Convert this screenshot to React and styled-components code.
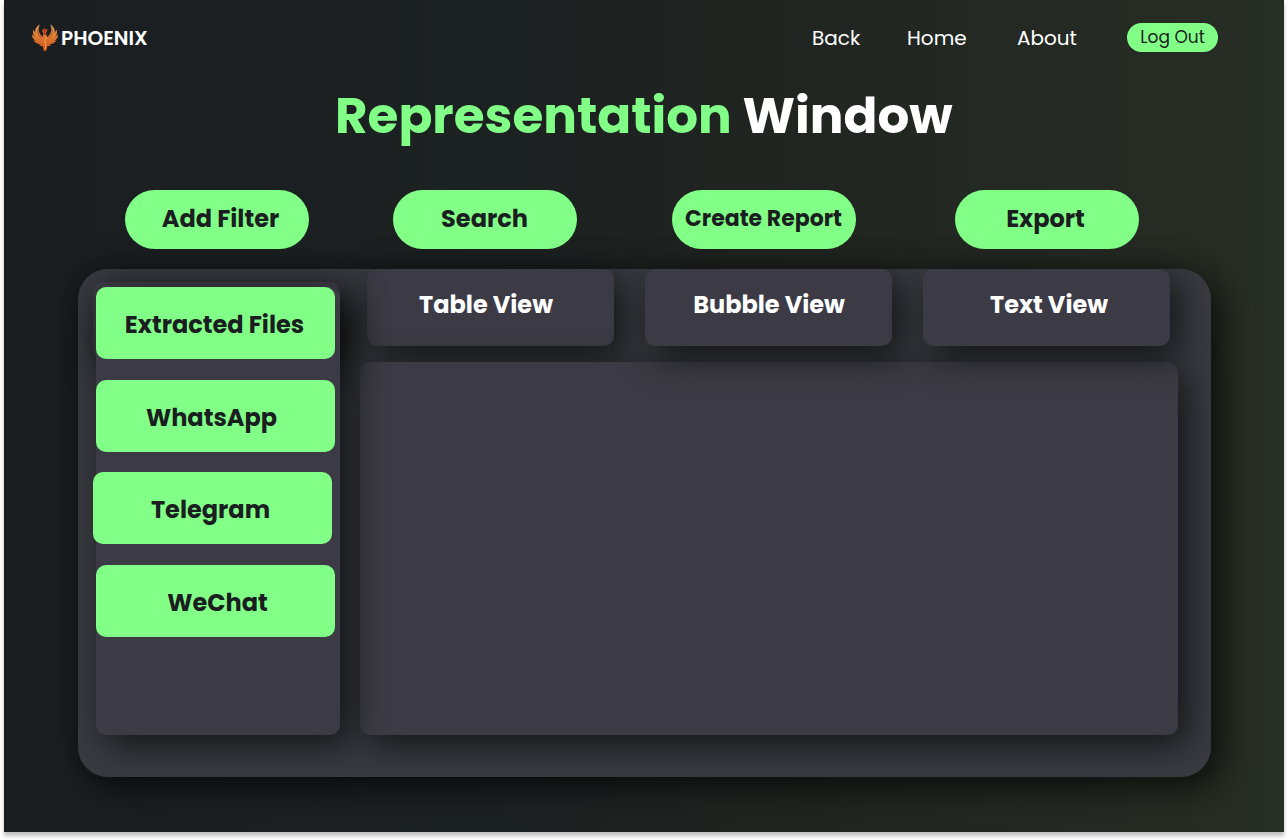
import React from "react";
import styled, { createGlobalStyle } from "styled-components";

const Global = createGlobalStyle`
  * { box-sizing: border-box; }
  body { margin: 0; min-height: 840px; background: #fff; font-family: Poppins, Inter, "Liberation Sans", sans-serif; overflow: hidden; }
  button { font: inherit; border: 0; padding: 0; margin: 0; cursor: pointer; }
`;
const green = "#82ff87";
const ink = "#1a1e20";
const slate = "#3c3b45";
const lift = "9px 10px 36px rgba(0,0,0,.68)";

const Window = styled.main`
  width: 1280px; height: 832px; margin-left: 4px;
  display: flex; flex-direction: column;
  background: linear-gradient(90deg, #1a1e21 0%, #1c2121 40%, #222722 70%, #272e24 100%);
  box-shadow: 0 4px 4px rgba(0,0,0,.25);
`;
const Header = styled.header`
  display: flex; align-items: center; justify-content: space-between;
  height: 76px; padding: 0 66px 0 27px;
`;
const Brand = styled.div`
  display: flex; align-items: center; gap: 2px; color: #fff;
  font-size: 20px; font-weight: 600;
`;
const Nav = styled.nav`display: flex; align-items: center;`;
const NavLink = styled.a`
  color: #fff; font-size: 20px; line-height: 30px; white-space: nowrap;
  width: ${p => p.$w}px; padding-bottom: 1px;
`;
const LogOut = styled.button`
  width: 91px; height: 29px; border-radius: 15px; background: ${green}; color: ${ink};
  && { font-size: 17px; } margin-top: -1px; padding-bottom: 1px; white-space: nowrap;
`;
const Title = styled.h1`
  margin: 0; padding-left: 331px; height: 114px; line-height: 79px;
  font-size: 50px; font-weight: 700; color: #fff; white-space: nowrap;
`;
const Accent = styled.span`color: ${green};`;
const Label = styled.button`
  white-space: nowrap; color: ${ink};
  padding-left: ${p => Math.max(p.$nudge || 0, 0) * 2}px;
  padding-right: ${p => Math.max(-(p.$nudge || 0), 0) * 2}px;
  && { font-size: ${p => p.$size || 24}px; font-weight: 700; }
`;
const Actions = styled.div`display: flex; height: 79px; padding-left: 121px; z-index: 1;`;
const Pill = styled(Label)`
  width: 184px; height: 59px; border-radius: 30px; background: ${green};
  margin-right: ${p => p.$gap || 0}px;
  padding-bottom: 3px;
`;
const Board = styled.section`
  width: 1133px; height: 508px; margin-left: 74px; border-radius: 30px; background: #3a3b41;
  box-shadow: ${lift};
  display: flex; gap: 20px; padding-left: 18px;
  isolation: isolate;
`;
const SidebarArea = styled.aside`
  position: relative; z-index: 3; width: 244px; height: 448px; margin-top: 18px;
  &::before {
    content: ""; position: absolute; z-index: -1; left: -3px; top: -5px;
    width: 247px; height: 77px; border-radius: 10px; background: ${slate}; box-shadow: ${lift};
  }
`;
const Sidebar = styled.div`
  height: 448px; border-radius: 10px; background: ${slate}; box-shadow: ${lift};
`;
const Main = styled.div`width: 818px; display: flex; flex-direction: column;`;
const Tabs = styled.div`display: flex; gap: 31px; padding-left: 7px; height: 93px;`;
const Tab = styled(Label)`
  width: 247px; height: 77px; border-radius: 10px; background: ${slate}; color: #fff;
  box-shadow: ${lift}; z-index: ${p => p.$level};
  padding-bottom: 7px;
`;
const Content = styled.div`
  height: 373px; border-radius: 10px; background: ${slate}; box-shadow: ${lift}; z-index: 1;
`;
const Source = styled(Label)`
  display: block; width: 239px; height: 72px; border-radius: 10px; background: ${green};
  margin: 0 0 ${p => p.$gap || 0}px ${p => p.$shift || 0}px;
  padding-top: 2px;
`;

const Phoenix = () => (
  <svg width="28" height="28" viewBox="0 0 28 28">
    <defs>
      <linearGradient id="fire" x1="0" y1="0" x2="0" y2="1">
        <stop offset="0" stopColor="#e39a52" /><stop offset=".5" stopColor="#de7630" /><stop offset="1" stopColor="#cf4d1c" />
      </linearGradient>
    </defs>
    <path fill="url(#fire)" d="M9 0.500C6 5 8 10 12 13L12.200 9.500Q10.500 7 12 5Q14 4 16.500 6L15.500 7.500Q14.500 9 16.200 13C20 10 22 5 19 0.500C23 2.500 24.500 6 23.500 9.500L25.500 5.500C26.700 9 25.700 11.500 24 13L27.200 10.500C26.700 14.500 25 16 23 16.800L25.700 16.500C23 19.500 20.500 20.300 18 20.500L20 22L16.500 22L15.500 26L14 27.500L12.500 26L11.500 22L8 22L10 20.500C7.500 20.300 5 19.500 2.300 16.500L5 16.800C3 16 1.300 14.500 0.800 10.500L4 13C2.300 11.500 1.300 9 2.500 5.500L4.500 9.500C3.500 6 5 2.500 9 0.500Z" />
    <path d="M6.500 6Q6.500 11 10.500 14M21.500 6Q21.500 11 17.500 14" fill="none" stroke="#6b321b" strokeWidth=".5" />
    <path d="M12 5Q14 4 16.500 6L14.500 7.500L15 11H12.500V8Z" fill="#b93218" />
    <path d="M15.500 13Q12.500 17 14.500 20Q15.500 22 14 25.500" fill="none" stroke="#f0a545" strokeWidth="1" />
  </svg>
);

export default function App() {
  return (
    <>
      <Global />
      <Window>
        <Header>
          <Brand><Phoenix /><span>PHOENIX</span></Brand>
          <Nav>
            <NavLink $w={95}>Back</NavLink>
            <NavLink $w={110}>Home</NavLink>
            <NavLink $w={110}>About</NavLink>
            <LogOut>Log Out</LogOut>
          </Nav>
        </Header>
        <Title><Accent>Representation</Accent> Window</Title>
        <Actions>
          <Pill $gap={84} $nudge={3.5}>Add Filter</Pill>
          <Pill $gap={95} $nudge={-0.5}>Search</Pill>
          <Pill $gap={99} $size={22} $nudge={-0.5}>Create Report</Pill>
          <Pill $nudge={-1.5}>Export</Pill>
        </Actions>
        <Board>
          <SidebarArea>
            <Sidebar>
              <Source $gap={21} $nudge={-1}>Extracted Files</Source>
              <Source $gap={20} $nudge={-4}>WhatsApp</Source>
              <Source $gap={21} $shift={-3} $nudge={-2}>Telegram</Source>
              <Source $nudge={2}>WeChat</Source>
            </Sidebar>
          </SidebarArea>
          <Main>
            <Tabs>
              <Tab $level={0} $nudge={-4.5}>Table View</Tab>
              <Tab $level={2} $nudge={0.5}>Bubble View</Tab>
              <Tab $level={2} $nudge={2.5}>Text View</Tab>
            </Tabs>
            <Content />
          </Main>
        </Board>
      </Window>
    </>
  );
}
